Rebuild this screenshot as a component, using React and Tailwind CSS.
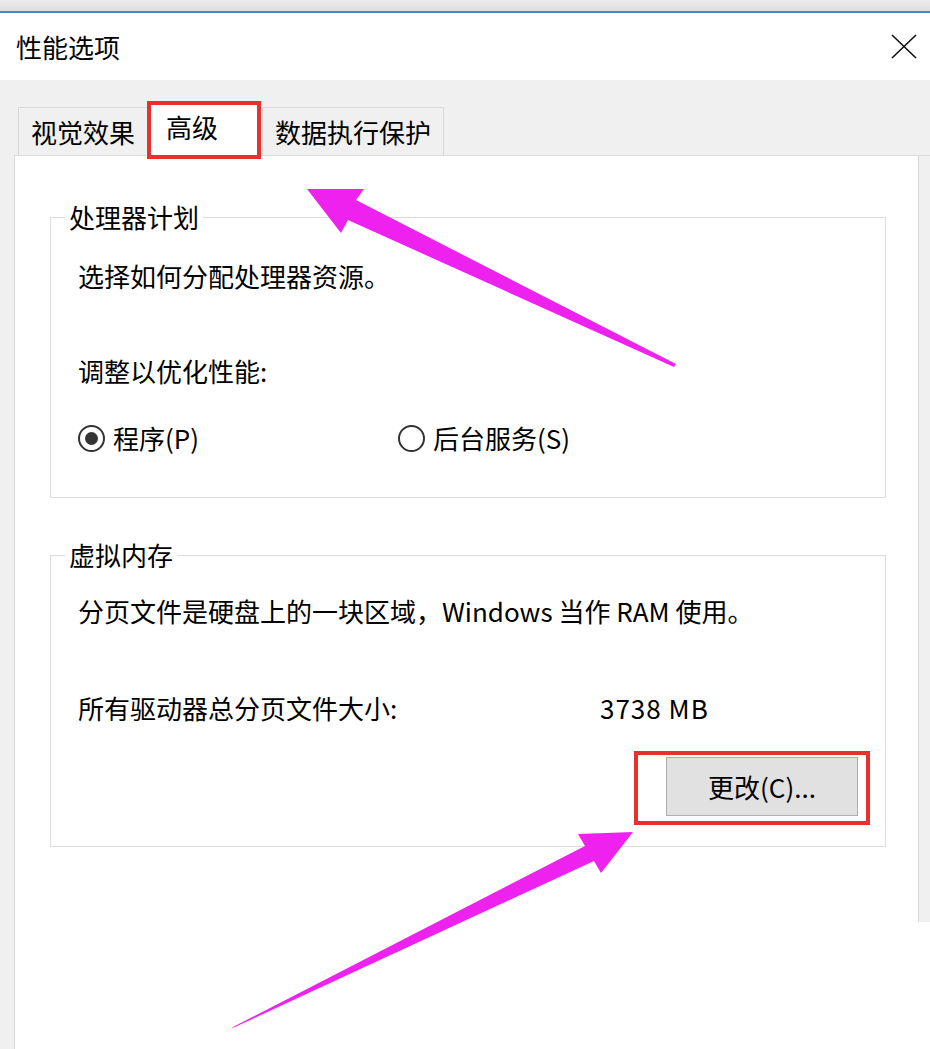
import React from 'react';

const FONT = "font-['Noto_Sans_CJK_SC','Noto_Sans',sans-serif]";

function Radio({ checked, label }) {
    return (
        <label className="flex items-center gap-[8px]">
            <span className="w-[27px] h-[27px] rounded-full border-2 border-[#333] bg-white flex items-center justify-center">
                {checked && <span className="w-[13px] h-[13px] rounded-full bg-[#333]" />}
            </span>
            <span>{label}</span>
        </label>
    );
}

function GroupBox({ title, children, className = '' }) {
    return (
        <fieldset className={`border border-[#dcdcdc] ${className}`}>
            <legend className="ml-[14px] px-[4px] leading-[36px]">{title}</legend>
            <div className="px-[27px]">{children}</div>
        </fieldset>
    );
}

export default function App() {
    return (
        <div className={`relative w-[930px] h-[1049px] overflow-hidden bg-white text-[26px] text-black ${FONT}`}>
            <div className="flex flex-col h-full">
                {/* Window top edge */}
                <div className="h-[11px] bg-gradient-to-b from-[#ececec] to-[#dedede]" />
                <div className="h-[2px] bg-[#4a86c5]" />

                {/* Title bar */}
                <div className="h-[67px] flex items-center justify-between pl-[16px] pr-[12px]">
                    <span className="leading-[36px]">性能选项</span>
                    <svg width="26" height="26" viewBox="0 0 26 26" className="mr-[1px]">
                        <path d="M1 1 L25 24 M25 1 L1 24" stroke="#111" strokeWidth="1.6" fill="none" />
                    </svg>
                </div>

                {/* Body */}
                <div className="flex-1 flex flex-col bg-[#f0f0f0]">
                    {/* Tabs */}
                    <div className="h-[75px] flex items-end pl-[18px]">
                        <div className="h-[48px] w-[130px] border border-b-0 border-[#d9d9d9] bg-[#f0f0f0] pl-[12px] flex items-center">
                            视觉效果
                        </div>
                        <div className="relative z-10 h-[55px] w-[112px] -mb-px bg-white border-x border-t border-[#d9d9d9] pl-[17px] pt-[5px]">
                            高级
                            <div className="absolute left-[-2px] top-[-1px] w-[114px] h-[58px] border-[4px] border-[#e8302f]" />
                        </div>
                        <div className="h-[48px] w-[182px] ml-[2px] border border-b-0 border-[#d9d9d9] bg-[#f0f0f0] pl-[12px] flex items-center">
                            数据执行保护
                        </div>
                    </div>

                    {/* Panel row */}
                    <div className="flex-1 flex">
                        <div className="w-[14px]" />
                        <div className="flex-1 bg-white border-t border-l border-[#d9d9d9] pl-[35px] pr-[32px] pt-[43px]">
                            <GroupBox title="处理器计划">
                                <p className="leading-[36px] mt-[23px]">选择如何分配处理器资源。</p>
                                <p className="leading-[36px] mt-[59px]">调整以优化性能:</p>
                                <div className="flex mt-[31px] mb-[41px] leading-[36px]">
                                    <div className="w-[320px]">
                                        <Radio checked label="程序(P)" />
                                    </div>
                                    <Radio label="后台服务(S)" />
                                </div>
                            </GroupBox>

                            <GroupBox title="虚拟内存" className="mt-[39px]">
                                <p className="leading-[36px] mt-[20px]">分页文件是硬盘上的一块区域，Windows 当作 RAM 使用。</p>
                                <div className="flex leading-[36px] mt-[61px]">
                                    <span className="w-[522px]">所有驱动器总分页文件大小:</span>
                                    <span className="tracking-[1px]">3738 MB</span>
                                </div>
                                <div className="flex justify-end mt-[31px] mb-[30px]">
                                    <button className="relative w-[192px] h-[59px] bg-[#e1e1e1] border border-[#adadad] text-[26px] leading-[36px]">
                                        更改(C)...
                                        <span className="absolute left-[-33px] top-[-7px] right-[-13px] bottom-[-10px] border-[4px] border-[#e8302f]" />
                                    </button>
                                </div>
                            </GroupBox>
                        </div>
                        <div className="w-[12px] flex flex-col">
                            <div className="h-[767px] border-l border-t border-[#d9d9d9]" />
                            <div className="flex-1 bg-white" />
                        </div>
                    </div>
                </div>
            </div>

            {/* Annotation arrows */}
            <svg className="absolute inset-0 pointer-events-none" width="930" height="1049" viewBox="0 0 930 1049">
                <polygon
                    points="307,189 364,189 356,200 676,364 674,367 348,220 341,233"
                    fill="#ee22ee"
                />
                <polygon
                    points="633,832 578,834 585,846 231,1028 235,1027 594,861 601,873"
                    fill="#ee22ee"
                />
            </svg>
        </div>
    );
}
